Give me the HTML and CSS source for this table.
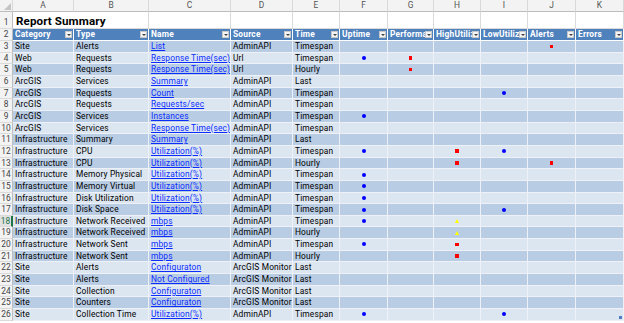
FILE: index.html
```html
<!DOCTYPE html>
<html>
<head>
<meta charset="utf-8">
<link rel="stylesheet" href="styles.css">
</head>
<body>
<div class="sheet">
  <div class="row colhead">
    <span class="corner"><i class="selall"></i></span>
    <span>A</span><span>B</span><span>C</span><span>D</span><span>E</span><span>F</span><span>G</span><span>H</span><span>I</span><span>J</span><span>K</span>
  </div>
  <div class="row title">
    <span class="rh">1</span>
    <span class="span2">Report Summary</span>
    <span></span><span></span><span></span><span></span><span></span><span></span><span></span><span></span><span></span>
  </div>
  <div class="row thead">
    <span class="rh">2</span>
    <span><em>Category</em><i class="flt"></i></span>
    <span><em>Type</em><i class="flt"></i></span>
    <span><em>Name</em><i class="flt"></i></span>
    <span><em>Source</em><i class="flt"></i></span>
    <span><em>Time</em><i class="flt"></i></span>
    <span><em>Uptime</em><i class="flt"></i></span>
    <span><em>Performance</em><i class="flt"></i></span>
    <span><em>HighUtilization</em><i class="flt"></i></span>
    <span><em>LowUtilization</em><i class="flt"></i></span>
    <span><em>Alerts</em><i class="flt"></i></span>
    <span><em>Errors</em><i class="flt"></i></span>
  </div>

  <div class="row dark"><span class="rh">3</span><span>Site</span><span>Alerts</span><span><a>List</a></span><span>AdminAPI</span><span>Timespan</span><span class="m"></span><span class="m"></span><span class="m"></span><span class="m"></span><span class="m"><i class="sq"></i></span><span class="m"></span></div>
  <div class="row light"><span class="rh">4</span><span>Web</span><span>Requests</span><span><a>Response Time(sec)</a></span><span>Url</span><span>Timespan</span><span class="m"><i class="dot"></i></span><span class="m"><i class="sq"></i></span><span class="m"></span><span class="m"></span><span class="m"></span><span class="m"></span></div>
  <div class="row dark"><span class="rh">5</span><span>Web</span><span>Requests</span><span><a>Response Time(sec)</a></span><span>Url</span><span>Hourly</span><span class="m"></span><span class="m"><i class="sq"></i></span><span class="m"></span><span class="m"></span><span class="m"></span><span class="m"></span></div>
  <div class="row light"><span class="rh">6</span><span>ArcGIS</span><span>Services</span><span><a>Summary</a></span><span>AdminAPI</span><span>Last</span><span class="m"></span><span class="m"></span><span class="m"></span><span class="m"></span><span class="m"></span><span class="m"></span></div>
  <div class="row dark"><span class="rh">7</span><span>ArcGIS</span><span>Requests</span><span><a>Count</a></span><span>AdminAPI</span><span>Timespan</span><span class="m"></span><span class="m"></span><span class="m"></span><span class="m"><i class="dot"></i></span><span class="m"></span><span class="m"></span></div>
  <div class="row light"><span class="rh">8</span><span>ArcGIS</span><span>Requests</span><span><a>Requests/sec</a></span><span>AdminAPI</span><span>Timespan</span><span class="m"></span><span class="m"></span><span class="m"></span><span class="m"></span><span class="m"></span><span class="m"></span></div>
  <div class="row dark"><span class="rh">9</span><span>ArcGIS</span><span>Services</span><span><a>Instances</a></span><span>AdminAPI</span><span>Timespan</span><span class="m"><i class="dot"></i></span><span class="m"></span><span class="m"></span><span class="m"></span><span class="m"></span><span class="m"></span></div>
  <div class="row light"><span class="rh">10</span><span>ArcGIS</span><span>Services</span><span><a>Response Time(sec)</a></span><span>AdminAPI</span><span>Timespan</span><span class="m"></span><span class="m"></span><span class="m"></span><span class="m"></span><span class="m"></span><span class="m"></span></div>
  <div class="row dark"><span class="rh">11</span><span>Infrastructure</span><span>Summary</span><span><a>Summary</a></span><span>AdminAPI</span><span>Last</span><span class="m"></span><span class="m"></span><span class="m"></span><span class="m"></span><span class="m"></span><span class="m"></span></div>
  <div class="row light"><span class="rh">12</span><span>Infrastructure</span><span>CPU</span><span><a>Utilization(%)</a></span><span>AdminAPI</span><span>Timespan</span><span class="m"><i class="dot"></i></span><span class="m"></span><span class="m"><i class="sq"></i></span><span class="m"><i class="dot"></i></span><span class="m"></span><span class="m"></span></div>
  <div class="row dark"><span class="rh">13</span><span>Infrastructure</span><span>CPU</span><span><a>Utilization(%)</a></span><span>AdminAPI</span><span>Hourly</span><span class="m"></span><span class="m"></span><span class="m"><i class="sq"></i></span><span class="m"></span><span class="m"><i class="sq"></i></span><span class="m"></span></div>
  <div class="row light"><span class="rh">14</span><span>Infrastructure</span><span>Memory Physical</span><span><a>Utilization(%)</a></span><span>AdminAPI</span><span>Timespan</span><span class="m"><i class="dot"></i></span><span class="m"></span><span class="m"></span><span class="m"></span><span class="m"></span><span class="m"></span></div>
  <div class="row dark"><span class="rh">15</span><span>Infrastructure</span><span>Memory Virtual</span><span><a>Utilization(%)</a></span><span>AdminAPI</span><span>Timespan</span><span class="m"><i class="dot"></i></span><span class="m"></span><span class="m"></span><span class="m"></span><span class="m"></span><span class="m"></span></div>
  <div class="row light"><span class="rh">16</span><span>Infrastructure</span><span>Disk Utilization</span><span><a>Utilization(%)</a></span><span>AdminAPI</span><span>Timespan</span><span class="m"><i class="dot"></i></span><span class="m"></span><span class="m"></span><span class="m"></span><span class="m"></span><span class="m"></span></div>
  <div class="row dark"><span class="rh">17</span><span>Infrastructure</span><span>Disk Space</span><span><a>Utilization(%)</a></span><span>AdminAPI</span><span>Timespan</span><span class="m"><i class="dot"></i></span><span class="m"></span><span class="m"></span><span class="m"><i class="dot"></i></span><span class="m"></span><span class="m"></span></div>
  <div class="row light"><span class="rh active">18</span><span>Infrastructure</span><span>Network Received</span><span><a>mbps</a></span><span>AdminAPI</span><span>Timespan</span><span class="m"><i class="dot"></i></span><span class="m"></span><span class="m"><i class="tri"></i></span><span class="m"></span><span class="m"></span><span class="m"></span></div>
  <div class="row dark"><span class="rh">19</span><span>Infrastructure</span><span>Network Received</span><span><a>mbps</a></span><span>AdminAPI</span><span>Hourly</span><span class="m"></span><span class="m"></span><span class="m"><i class="tri"></i></span><span class="m"></span><span class="m"></span><span class="m"></span></div>
  <div class="row light"><span class="rh">20</span><span>Infrastructure</span><span>Network Sent</span><span><a>mbps</a></span><span>AdminAPI</span><span>Timespan</span><span class="m"><i class="dot"></i></span><span class="m"></span><span class="m"><i class="sq"></i></span><span class="m"></span><span class="m"></span><span class="m"></span></div>
  <div class="row dark"><span class="rh">21</span><span>Infrastructure</span><span>Network Sent</span><span><a>mbps</a></span><span>AdminAPI</span><span>Hourly</span><span class="m"></span><span class="m"></span><span class="m"><i class="sq"></i></span><span class="m"></span><span class="m"></span><span class="m"></span></div>
  <div class="row light"><span class="rh">22</span><span>Site</span><span>Alerts</span><span><a>Configuraton</a></span><span>ArcGIS Monitor</span><span>Last</span><span class="m"></span><span class="m"></span><span class="m"></span><span class="m"></span><span class="m"></span><span class="m"></span></div>
  <div class="row dark"><span class="rh">23</span><span>Site</span><span>Alerts</span><span><a>Not Configured</a></span><span>ArcGIS Monitor</span><span>Last</span><span class="m"></span><span class="m"></span><span class="m"></span><span class="m"></span><span class="m"></span><span class="m"></span></div>
  <div class="row light"><span class="rh">24</span><span>Site</span><span>Collection</span><span><a>Configuraton</a></span><span>ArcGIS Monitor</span><span>Last</span><span class="m"></span><span class="m"></span><span class="m"></span><span class="m"></span><span class="m"></span><span class="m"></span></div>
  <div class="row dark"><span class="rh">25</span><span>Site</span><span>Counters</span><span><a>Configuraton</a></span><span>ArcGIS Monitor</span><span>Last</span><span class="m"></span><span class="m"></span><span class="m"></span><span class="m"></span><span class="m"></span><span class="m"></span></div>
  <div class="row light"><span class="rh">26</span><span>Site</span><span>Collection Time</span><span><a>Utilization(%)</a></span><span>AdminAPI</span><span>Timespan</span><span class="m"><i class="dot"></i></span><span class="m"></span><span class="m"></span><span class="m"><i class="dot"></i></span><span class="m"></span><span class="m resize"><i class="handle"></i></span></div>
</div>
</body>
</html>
```

FILE: styles.css
```css
* { box-sizing: border-box; }

body {
  margin: 0;
  background: #ffffff;
  font-family: Roboto, "Open Sans", "Liberation Sans", sans-serif;
  font-size: 8.4px;
  letter-spacing: 0.15px;
  color: #000000;
}

.sheet {
  width: 624px;
  overflow: hidden;
}

.row {
  display: grid;
  grid-template-columns: 13px 61px 75px 82px 62px 47px 48px 46px 47px 47px 48px 48px;
  height: 11.67px;
}

.row > span {
  display: block;
  padding-left: 2px;
  line-height: 11px;
  white-space: nowrap;
  overflow: hidden;
  border-right: 1px solid #eef2f8;
  border-bottom: 1px solid #eef2f8;
}

/* column letters */
.colhead {
  height: 12px;
  background: #f3f3f3;
}
.colhead > span {
  padding-left: 0;
  text-align: center;
  color: #555555;
  line-height: 11px;
  letter-spacing: 0;
  border-right: 1px solid #d9d9d9;
  border-bottom: 1px solid #bdbdbd;
}
.corner {
  position: relative;
}
.selall {
  position: absolute;
  right: 1px;
  bottom: 1px;
  width: 0;
  height: 0;
  border-left: 7px solid transparent;
  border-bottom: 7px solid #c4c4c4;
}

/* row numbers */
.row > .rh {
  padding-left: 0;
  text-align: center;
  color: #444444;
  background: #f3f3f3;
  letter-spacing: 0;
  border-right: 1px solid #bdbdbd;
  border-bottom: 1px solid #dadada;
}
.row > .rh.active {
  color: #217346;
  background: #e2e2e2;
  border-right: 2px solid #217346;
}

/* title row */
.title {
  height: 17.33px;
}
.title > span {
  border-right-color: #dadada;
  border-bottom-color: #dadada;
}
.title > .rh {
  line-height: 17px;
  padding-top: 2px;
}
.title > .span2 {
  grid-column: span 2;
  font-weight: 700;
  font-size: 11.6px;
  letter-spacing: 0.1px;
  line-height: 19px;
  padding-left: 3px;
}

/* table header */
.thead > span:not(.rh) {
  display: flex;
  align-items: center;
  background: #4f81bd;
  color: #ffffff;
  font-weight: 700;
  letter-spacing: 0.2px;
  border-right: 1px solid #ffffff;
  border-bottom: 1px solid #ffffff;
  padding-right: 1px;
}
.thead em {
  flex: 1;
  min-width: 0;
  overflow: hidden;
  font-style: normal;
}
.flt {
  position: relative;
  flex: none;
  width: 7px;
  height: 7px;
  background: #f4f4f4;
  border: 1px solid #c8c8c8;
}
.flt::after {
  content: "";
  position: absolute;
  left: 1px;
  top: 2px;
  border-left: 2px solid transparent;
  border-right: 2px solid transparent;
  border-top: 2px solid #404040;
}

/* bands */
.dark > span:not(.rh) { background: #b8cce4; }
.light > span:not(.rh) { background: #dce6f1; }

a {
  color: #0b2dff;
  text-decoration: underline;
}

/* markers */
.row > .m {
  display: flex;
  align-items: center;
  justify-content: center;
  padding-left: 0;
  position: relative;
}
.dot {
  width: 4px;
  height: 4px;
  border-radius: 50%;
  background: #0000ff;
}
.sq {
  width: 3.5px;
  height: 3.5px;
  background: #ff0000;
}
.tri {
  width: 0;
  height: 0;
  border-left: 2.5px solid transparent;
  border-right: 2.5px solid transparent;
  border-bottom: 4.5px solid #ffff00;
}
.handle {
  position: absolute;
  right: 1px;
  bottom: 1px;
  width: 3px;
  height: 3px;
  background: #4f7cc4;
}
```
